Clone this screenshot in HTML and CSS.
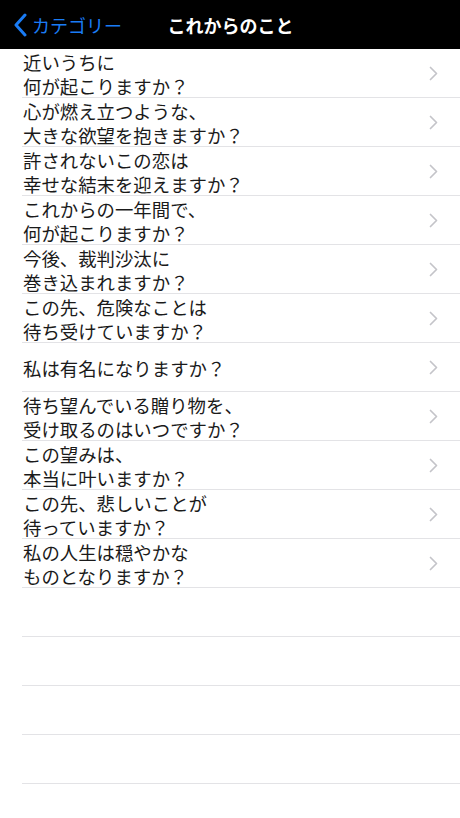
FILE: index.html
```html
<!DOCTYPE html>
<html lang="ja">
<head>
    <meta charset="UTF-8">
    <meta name="viewport" content="width=device-width, initial-scale=1.0">
    <title>これからのこと</title>
    <link rel="stylesheet" href="styles.css">
</head>
<body>

<div class="navbar">
    <a class="back" href="#">
        <svg class="back-icon" width="14" height="24" viewBox="0 0 14 24">
            <path d="M12 2 L3 12 L12 22" fill="none" stroke="#1a7cf5" stroke-width="3" stroke-linecap="round" stroke-linejoin="round"/>
        </svg>
        <span>カテゴリー</span>
    </a>
    <div class="title">これからのこと</div>
</div>

<ul class="list">
    <li class="row"><span class="text">近いうちに<br>何が起こりますか？</span><svg class="chev" viewBox="0 0 9 15"><path d="M1.5 1.5 L7.5 7.5 L1.5 13.5"/></svg></li>
    <li class="row"><span class="text">心が燃え立つような、<br>大きな欲望を抱きますか？</span><svg class="chev" viewBox="0 0 9 15"><path d="M1.5 1.5 L7.5 7.5 L1.5 13.5"/></svg></li>
    <li class="row"><span class="text">許されないこの恋は<br>幸せな結末を迎えますか？</span><svg class="chev" viewBox="0 0 9 15"><path d="M1.5 1.5 L7.5 7.5 L1.5 13.5"/></svg></li>
    <li class="row"><span class="text">これからの一年間で、<br>何が起こりますか？</span><svg class="chev" viewBox="0 0 9 15"><path d="M1.5 1.5 L7.5 7.5 L1.5 13.5"/></svg></li>
    <li class="row"><span class="text">今後、裁判沙汰に<br>巻き込まれますか？</span><svg class="chev" viewBox="0 0 9 15"><path d="M1.5 1.5 L7.5 7.5 L1.5 13.5"/></svg></li>
    <li class="row"><span class="text">この先、危険なことは<br>待ち受けていますか？</span><svg class="chev" viewBox="0 0 9 15"><path d="M1.5 1.5 L7.5 7.5 L1.5 13.5"/></svg></li>
    <li class="row"><span class="text">私は有名になりますか？</span><svg class="chev" viewBox="0 0 9 15"><path d="M1.5 1.5 L7.5 7.5 L1.5 13.5"/></svg></li>
    <li class="row"><span class="text">待ち望んでいる贈り物を、<br>受け取るのはいつですか？</span><svg class="chev" viewBox="0 0 9 15"><path d="M1.5 1.5 L7.5 7.5 L1.5 13.5"/></svg></li>
    <li class="row"><span class="text">この望みは、<br>本当に叶いますか？</span><svg class="chev" viewBox="0 0 9 15"><path d="M1.5 1.5 L7.5 7.5 L1.5 13.5"/></svg></li>
    <li class="row"><span class="text">この先、悲しいことが<br>待っていますか？</span><svg class="chev" viewBox="0 0 9 15"><path d="M1.5 1.5 L7.5 7.5 L1.5 13.5"/></svg></li>
    <li class="row"><span class="text">私の人生は穏やかな<br>ものとなりますか？</span><svg class="chev" viewBox="0 0 9 15"><path d="M1.5 1.5 L7.5 7.5 L1.5 13.5"/></svg></li>
    <li class="row empty"></li>
    <li class="row empty"></li>
    <li class="row empty"></li>
    <li class="row empty"></li>
    <li class="row empty"></li>
</ul>

</body>
</html>
```

FILE: styles.css
```css
body {
    margin: 0;
    font-family: "Noto Sans CJK JP", "Noto Sans", sans-serif;
    background-color: white;
    overflow: hidden;
}
.navbar {
    height: 49px;
    background-color: black;
    display: flex;
    align-items: center;
    justify-content: center;
    position: relative;
}
.back {
    position: absolute;
    left: 13px;
    top: 0;
    height: 49px;
    display: flex;
    align-items: center;
    gap: 5px;
    color: #1a7cf5;
    text-decoration: none;
    font-size: 18px;
}
.back-icon {
    margin-top: 1px;
}
.title {
    color: white;
    font-size: 18px;
    font-weight: bold;
    margin-left: 1px;
}
.list {
    list-style: none;
    margin: 0;
    padding: 0;
}
.row {
    margin-left: 22px;
    height: 48px;
    border-bottom: 1px solid #e3e3e6;
    display: flex;
    align-items: center;
    justify-content: space-between;
    padding-left: 1px;
}
.text {
    font-size: 18.4px;
    line-height: 24px;
    color: #1a1a1a;
    margin-top: 1px;
}
.chev {
    width: 9px;
    height: 15px;
    margin-right: 22px;
    fill: none;
    stroke: #c4c4c9;
    stroke-width: 1.7;
    stroke-linecap: round;
    stroke-linejoin: round;
}
```
